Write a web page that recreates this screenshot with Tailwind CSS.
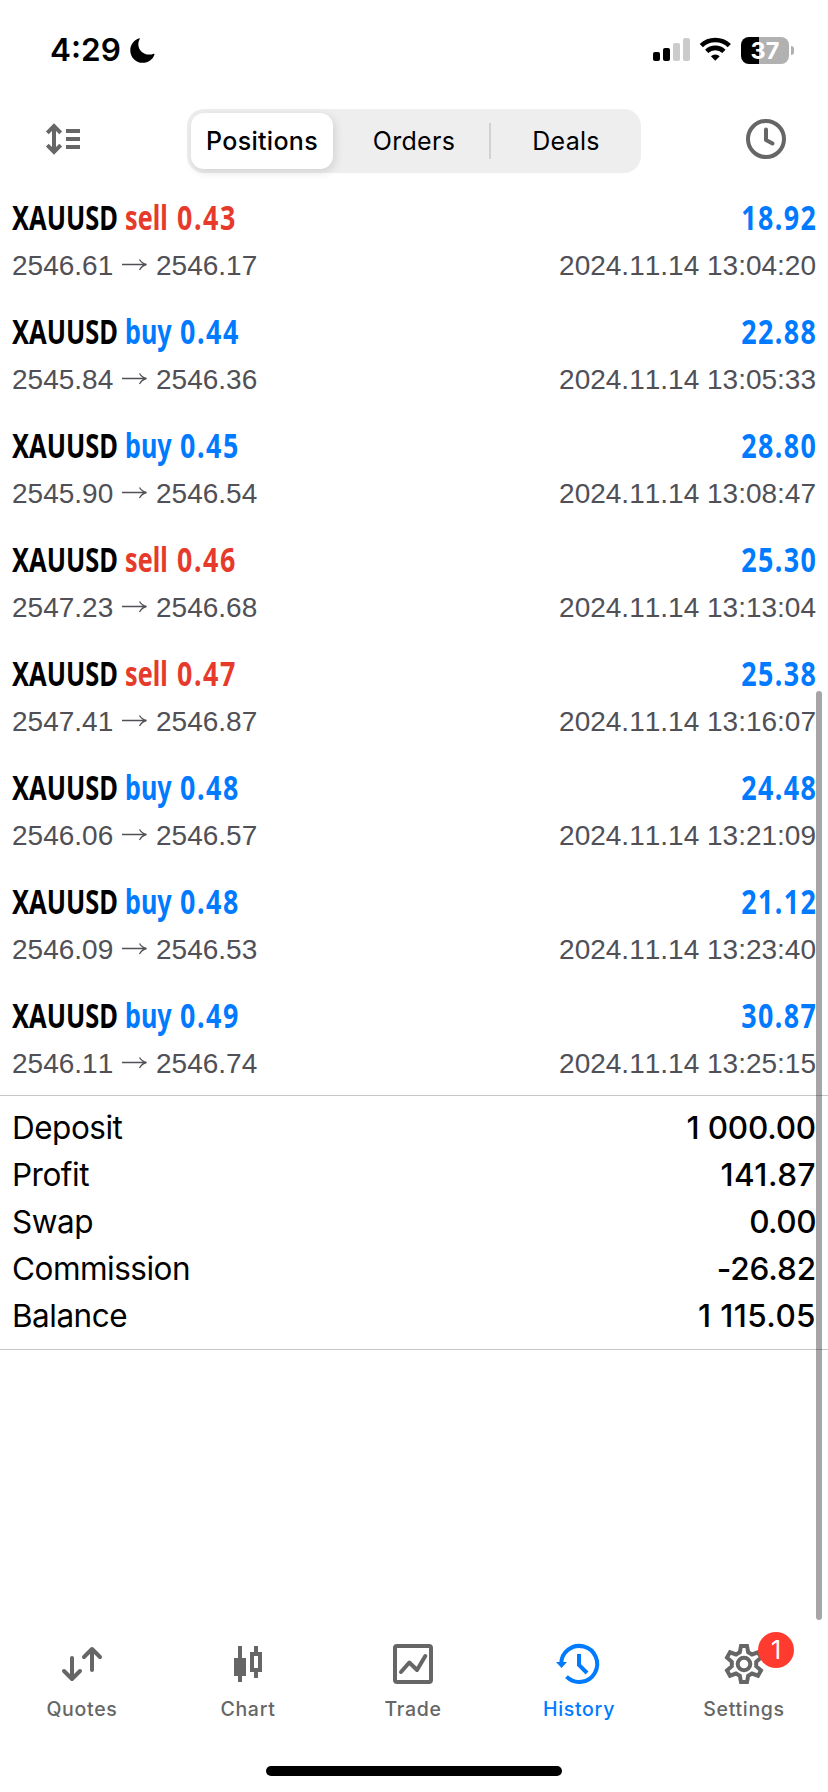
<!DOCTYPE html>
<html lang="en">
<head>
<meta charset="utf-8">
<title>History</title>
<script src="https://cdn.jsdelivr.net/npm/@tailwindcss/browser@4"></script>
</head>
<body class="bg-white">
<div class="relative flex h-[1792px] w-[828px] flex-col overflow-hidden bg-white font-['Inter',sans-serif] text-black">

  <!-- Status bar -->
  <div class="flex h-[100px] shrink-0 items-center justify-between pl-[50px] pr-[34px]">
    <div class="flex items-center gap-[9px]">
      <span class="text-[31.5px] leading-[40px] font-semibold">4:29</span>
      <svg width="25" height="25" viewBox="0 0 25 25"><path d="M9.3 0.3C4 2 .3 6.800.3 12.400C.3 19.300 5.900 24.800 12.700 24.800C18.200 24.800 22.900 21.300 24.500 16.400C24.600 15.900 24.200 15.500 23.700 15.700C22.200 16.400 20.700 16.600 19.200 16.600C12.900 16.600 8.300 12 8.300 6C8.300 4.300 8.800 2.600 9.700 1C9.900.5 9.800.2 9.300.3Z"/></svg>
    </div>
    <div class="flex items-center">
      <svg width="37" height="28" viewBox="0 0 37 28"><rect y="16" width="7" height="9" rx="2"/><rect x="10" y="12" width="7" height="13" rx="2"/><g fill="#cbcbcb"><rect x="20" y="7" width="7" height="18" rx="2"/><rect x="30" y="2" width="7" height="23" rx="2"/></g></svg>
      <svg class="ml-[9px]" width="33" height="28" viewBox="0 0 33 28"><g fill="none" stroke="#000" stroke-width="4.600"><path d="M2.300 9.700A20 20 0 0 1 30.300 9.700"/><path d="M7.700 15.400A12.300 12.300 0 0 1 24.900 15.400"/></g><path d="M16.300 24.700L11.900 20.300A6.300 6.300 0 0 1 20.700 20.300Z"/></svg>
      <div class="ml-[9px] flex h-[27px] w-[48px] items-center justify-center rounded-[8px] bg-[linear-gradient(to_right,#000_18px,#b1b1b1_18px)] text-[23.500px] leading-[27px] font-bold text-white">37</div>
      <div class="ml-[2px] h-[9px] w-[3px] rounded-r-full bg-[#b1b1b1]"></div>
    </div>
  </div>

  <!-- Toolbar -->
  <div class="flex h-[83px] shrink-0 pt-[9px] pr-[42px] pl-[45px]">
    <svg class="mt-[14px]" width="36" height="32" viewBox="0 0 36 32" fill="none" stroke="#666" stroke-width="4"><path d="M9 3V29M2.300 9.800L9 3L15.700 9.800M2.300 22.200L9 29L15.700 22.200M21 8H35M21 16H35M21 24H35"/></svg>
    <div class="ml-[106px] flex h-[64px] w-[454px] items-center rounded-[17px] bg-[#eee] p-[4px] text-[25px] leading-[34px] tracking-[0.300px]">
      <div class="flex h-[56px] w-[142px] items-center justify-center rounded-[13px] bg-white font-medium shadow-[2px_3px_10px_rgba(0,0,0,0.12)]">Positions</div>
      <div class="flex-1 pl-[6px] text-center">Orders</div>
      <div class="h-[36px] w-[2px] bg-[#d2d2d2]"></div>
      <div class="w-[146px] pl-[4px] text-center">Deals</div>
    </div>
    <svg class="mt-[10px] ml-auto" width="40" height="40" viewBox="0 0 40 40" fill="none" stroke="#666" stroke-width="4"><circle cx="20" cy="20" r="18"/><path d="M20 10.500V21L26.500 24.500" stroke-linecap="round" stroke-linejoin="round"/></svg>
  </div>

  <!-- Positions -->
  <div id="list" class="shrink-0"></div>

  <!-- Totals -->
  <div id="totals" class="shrink-0 border-y border-[#c6c6c8] pt-[8px] pr-[12px] pb-[10px] pl-[12px]"></div>

  <!-- Scroll indicator -->
  <div class="absolute top-[691px] right-[6px] h-[929px] w-[6px] rounded-full bg-black/35"></div>

  <!-- Tab bar -->
  <div class="mt-auto grid h-[152px] shrink-0 grid-cols-[164px_168px_162px_170px_160px] text-center text-[19.500px] leading-[26px] font-medium tracking-[0.700px] text-[#666]">
    <div class="flex flex-col items-center">
      <svg width="48" height="48" viewBox="0 0 48 48" fill="none" stroke="#666" stroke-width="4" stroke-linecap="round" stroke-linejoin="round"><path d="M14 18V39M6 31L14 39L22 31M34 30V9M26 17L34 9L42 17"/></svg>
      <span class="mt-[8px]">Quotes</span>
    </div>
    <div class="flex flex-col items-center">
      <svg width="48" height="48" viewBox="0 0 48 48" fill="#666"><path d="M14 6h4v12h4v18h-4v6h-4v-6h-4V18h4zM30 6h4v6h4v20h-4v6h-4v-6h-4V12h4zM30 16v12h4V16z" fill-rule="evenodd"/></svg>
      <span class="mt-[8px]">Chart</span>
    </div>
    <div class="flex flex-col items-center">
      <svg width="48" height="48" viewBox="0 0 48 48" fill="none" stroke="#666" stroke-width="4"><rect x="6" y="6" width="36" height="36" rx="2"/><path d="M12 32L20.300 22.500L28 30L36.300 16" stroke-linecap="round" stroke-linejoin="round"/></svg>
      <span class="mt-[8px]">Trade</span>
    </div>
    <div class="flex flex-col items-center text-[#007aff]">
      <svg width="48" height="48" viewBox="0 0 48 48" fill="none" stroke="#007aff" stroke-width="4"><path d="M6.200 24A18 18 0 1 1 11.500 36.700M24 14V25L32 33"/><path d="M1 22H12L6.500 28Z" fill="#007aff" stroke="none"/></svg>
      <span class="mt-[8px]">History</span>
    </div>
    <div class="relative flex flex-col items-center">
      <svg width="48" height="48" viewBox="0 0 48 48" fill="none" stroke="#666" stroke-width="4"><circle cx="24" cy="24" r="6.300"/><path d="M21 6H27L28.200 12.300L32 14.500L38 12.300L41 17.500L36.200 21.800V26.200L41 30.500L38 35.700L32 33.500L28.200 35.700L27 42H21L19.800 35.700L16 33.500L10 35.700L7 30.500L11.800 26.200V21.800L7 17.500L10 12.300L16 14.500L19.800 12.300Z"/></svg>
      <span class="mt-[8px]">Settings</span>
      <span class="absolute -top-[8px] left-[94px] flex size-[36px] items-center justify-center rounded-full bg-[#ff3b30] text-[25px] font-normal tracking-normal text-white">1</span>
    </div>
  </div>

  <!-- Home indicator -->
  <div class="absolute bottom-[16px] left-[266px] h-[10px] w-[296px] rounded-full bg-black"></div>
</div>

<script>
  const BUY = "text-[#007aff]", SELL = "text-[#e63a2b]";
  const rows = [
    ["sell", "0.43", "18.92", "2546.61", "2546.17", "13:04:20"],
    ["buy", "0.44", "22.88", "2545.84", "2546.36", "13:05:33"],
    ["buy", "0.45", "28.80", "2545.90", "2546.54", "13:08:47"],
    ["sell", "0.46", "25.30", "2547.23", "2546.68", "13:13:04"],
    ["sell", "0.47", "25.38", "2547.41", "2546.87", "13:16:07"],
    ["buy", "0.48", "24.48", "2546.06", "2546.57", "13:21:09"],
    ["buy", "0.48", "21.12", "2546.09", "2546.53", "13:23:40"],
    ["buy", "0.49", "30.87", "2546.11", "2546.74", "13:25:15"]
  ];
  document.getElementById("list").innerHTML = rows.map(([side, lot, profit, from, to, time]) => `
    <div class="h-[114px] pt-[11px] pr-[12px] pl-[12px]">
      <div class="flex h-[46px] justify-between font-['Noto_Sans',sans-serif] text-[34px] leading-[46px] font-bold whitespace-nowrap">
        <div class="flex">
          <div class="w-[113px]"><span class="inline-block origin-left scale-x-[0.75]">XAUUSD</span></div>
          <div class="flex ${side === "buy" ? BUY : SELL}">
            <div class="${side === "buy" ? "w-[55px]" : "w-[52px]"}"><span class="inline-block origin-left scale-x-[0.74]">${side}</span></div>
            <span class="inline-block origin-left scale-x-[0.79] tracking-[2px]">${lot}</span>
          </div>
        </div>
        <div class="-mr-[1px] text-[#007aff]"><span class="inline-block origin-right scale-x-[0.79] tracking-[1.800px]">${profit}</span></div>
      </div>
      <div class="mt-[8px] flex h-[36px] justify-between font-['Liberation_Sans',sans-serif] text-[28px] leading-[36px] text-[#505056] [font-kerning:none]">
        <div class="flex">
          <span class="w-[110px]">${from}</span>
          <svg class="mt-[9px] mr-[8px]" width="26" height="16" viewBox="0 0 26 16" fill="none" stroke="#505056" stroke-width="1.300"><path d="M0 7.500H24.500M17.500 2.500Q20 6.500 24.500 7.500Q20 8.500 17.500 13"/></svg>
          <span>${to}</span>
        </div>
        <span>2024.11.14 ${time}</span>
      </div>
    </div>`).join("");

  const totals = [
    ["Deposit", "1 000.00", "tracking-[-0.200px]"],
    ["Profit", "141.87", "tracking-[0.500px]"],
    ["Swap", "0.00", "tracking-[-0.500px]"],
    ["Commission", "-26.82", "tracking-[-0.100px]"],
    ["Balance", "1 115.05", "tracking-[0.400px]"]
  ];
  document.getElementById("totals").innerHTML = totals.map(([k, v, spacing]) => `
    <div class="flex h-[47px] justify-between text-[31.500px] leading-[47px]"><span class="tracking-[-0.500px]">${k}</span><span class="font-medium ${spacing}">${v}</span></div>`).join("");
</script>
</body>
</html>
